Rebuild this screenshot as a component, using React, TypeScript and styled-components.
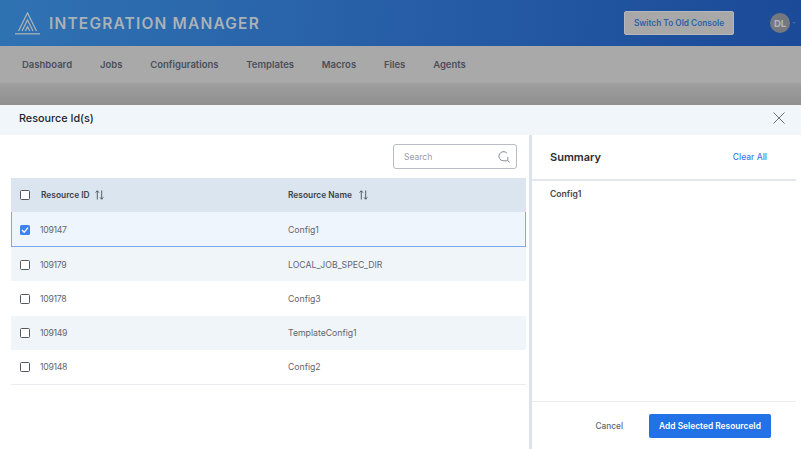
import styled, { createGlobalStyle } from "styled-components";

const GlobalStyle = createGlobalStyle`
  html, body {
    margin: 0;
    padding: 0;
    background: #fff;
  }
  * {
    box-sizing: border-box;
  }
`;

const Page = styled.div`
  width: 801px;
  height: 449px;
  display: flex;
  flex-direction: column;
  overflow: hidden;
  font-family: "Inter", "Liberation Sans", sans-serif;
`;

const Header = styled.header`
  height: 46px;
  flex: none;
  display: flex;
  align-items: center;
  padding: 0 4px 0 15px;
  background: linear-gradient(95deg, #2f72b2 0%, #2860a8 45%, #1b4a98 100%);
`;

const Brand = styled.div`
  display: flex;
  align-items: center;
  gap: 9px;
  flex: 1;
`;

const BrandName = styled.span`
  font-size: 15.5px;
  font-weight: 600;
  letter-spacing: 1.18px;
  color: #a9b2b8;
`;

const SwitchButton = styled.button`
  width: 110px;
  height: 24px;
  padding: 0;
  border: 1px solid #b4b7bb;
  border-radius: 2px;
  background: #a8a8a8;
  color: #2d62a8;
  font: 600 8.3px "Inter", sans-serif;
`;

const Avatar = styled.div`
  width: 20px;
  height: 20px;
  margin-left: 36px;
  border-radius: 50%;
  background: #75797f;
  color: #b4b6b8;
  font-size: 9.5px;
  font-weight: 700;
  display: flex;
  align-items: center;
  justify-content: center;
`;

const Caret = styled.span`
  width: 0;
  height: 0;
  margin: 0 1px 0 2px;
  border: 2px solid transparent;
  border-top-color: #3a66a8;
  border-bottom: none;
`;

const Nav = styled.nav`
  height: 37px;
  flex: none;
  display: flex;
  align-items: center;
  gap: 27.8px;
  padding: 0 22px;
  background: #a9a9a9;
`;

const NavItem = styled.span`
  font-size: 9.5px;
  font-weight: 600;
  color: #4b4f5a;
`;

const Crumb = styled.div`
  height: 22px;
  flex: none;
  overflow: hidden;
  padding: 19.5px 0 0 22px;
  background: linear-gradient(#9f9f9f, #8f8f8f);
  font-size: 9px;
  line-height: 11px;
  color: #666;
`;

const Modal = styled.section`
  flex: 1;
  min-height: 0;
  display: flex;
  flex-direction: column;
  background: #fff;
`;

const ModalHeader = styled.div`
  height: 30px;
  flex: none;
  display: flex;
  align-items: center;
  justify-content: space-between;
  padding: 0 16px 4px 19px;
  background: #f1f6fa;
`;

const ModalTitle = styled.h2`
  margin: 0;
  font-size: 10.8px;
  font-weight: 500;
  color: #22262b;
`;

const ModalBody = styled.div`
  flex: 1;
  min-height: 0;
  display: flex;
`;

const LeftPane = styled.div`
  width: 529px;
  flex: none;
  padding: 9px 3px 0 11px;
`;

const SearchRow = styled.div`
  display: flex;
  justify-content: flex-end;
  padding-right: 9px;
  margin-bottom: 9px;
`;

const SearchBox = styled.div`
  width: 124px;
  height: 25px;
  display: flex;
  align-items: center;
  justify-content: space-between;
  padding: 0 5px 0 10px;
  border: 1px solid #b9bbc6;
  border-radius: 3px;
  font-size: 8.5px;
  color: #9a9ca6;
`;

const HeadRow = styled.div`
  height: 34px;
  display: flex;
  align-items: center;
  background: #dae5f0;
`;

const Row = styled.div<{ $selected?: boolean; $shaded?: boolean; $last?: boolean }>`
  height: ${(p) => (p.$selected ? "35px" : p.$last ? "35.25px" : "34.25px")};
  padding-top: ${(p) => (p.$last ? "0" : "1px")};
  display: flex;
  align-items: center;
  font-size: 8.7px;
  color: #62666d;
  background: ${(p) => (p.$selected ? "#eef5fd" : p.$shaded ? "#f0f5f9" : "#fff")};
  border-style: solid;
  border-width: ${(p) => (p.$selected ? "0 1px 1px 1px" : p.$last ? "0 0 1px 0" : "0")};
  border-color: ${(p) => (p.$selected ? "#7ba9ec" : "#e9ebee")};
`;

const CheckCell = styled.div<{ $inset?: boolean }>`
  width: 29px;
  flex: none;
  padding-left: ${(p) => (p.$inset ? "8px" : "9px")};
  margin-right: ${(p) => (p.$inset ? "-1px" : "0")};
  display: flex;
  align-items: center;
`;

const IdCell = styled.div`
  width: 248px;
  flex: none;
  display: flex;
  align-items: center;
  gap: 5px;
  letter-spacing: -0.3px;
`;

const NameCell = styled.div`
  display: flex;
  align-items: center;
  gap: 7px;
`;

const HeadLabel = styled.span<{ $indent?: boolean }>`
  font-size: 8.4px;
  font-weight: 600;
  letter-spacing: 0;
  color: #3d4148;
  padding-left: ${(p) => (p.$indent ? "1px" : "0")};
`;

const Box = styled.span<{ $checked?: boolean }>`
  width: 10px;
  height: 10px;
  display: inline-flex;
  align-items: center;
  justify-content: center;
  border-radius: 1.5px;
  border: ${(p) => (p.$checked ? "none" : "1.2px solid #55585e")};
  background: ${(p) => (p.$checked ? "#3f82ee" : "#fff")};
`;

const Divider = styled.div`
  width: 3px;
  flex: none;
  background: #dce3ec;
`;

const RightPane = styled.aside`
  flex: 1;
  display: flex;
  flex-direction: column;
  padding-right: 5px;
`;

const SummaryHead = styled.div`
  height: 46px;
  flex: none;
  display: flex;
  align-items: center;
  justify-content: space-between;
  padding: 0 29px 0 18px;
  border-bottom: 2px solid #e4e8ed;
`;

const SummaryTitle = styled.span`
  font-size: 11px;
  font-weight: 600;
  color: #2b2e33;
`;

const ClearAll = styled.span`
  font-size: 8.5px;
  font-weight: 500;
  color: #3f7cf0;
`;

const SummaryList = styled.div`
  flex: 1;
  padding: 8px 18px;
  font-size: 8.6px;
  font-weight: 600;
  color: #43464c;
`;

const Footer = styled.div`
  height: 48px;
  flex: none;
  display: flex;
  align-items: center;
  justify-content: flex-end;
  gap: 26px;
  padding: 1px 25px 0 0;
  border-top: 1px solid #ebedf0;
`;

const CancelButton = styled.span`
  font-size: 8.3px;
  font-weight: 500;
  color: #5d6570;
`;

const PrimaryButton = styled.button`
  width: 122px;
  height: 24px;
  padding: 0;
  border: none;
  border-radius: 2px;
  background: #2271e6;
  color: #fff;
  font: 600 8.4px "Inter", sans-serif;
`;

const navItems = ["Dashboard", "Jobs", "Configurations", "Templates", "Macros", "Files", "Agents"];

const rows = [
  { id: "109147", name: "Config1", selected: true },
  { id: "109179", name: "LOCAL_JOB_SPEC_DIR" },
  { id: "109178", name: "Config3" },
  { id: "109149", name: "TemplateConfig1" },
  { id: "109148", name: "Config2" },
];

const Logo = () => (
  <svg width="25" height="23" viewBox="0 0 25 23" fill="none" stroke="#a9b2b8" strokeWidth="1.3">
    <path d="M0 21.8 H25" />
    <path d="M3.5 19 L12.5 1 L21.5 19" />
    <path d="M7 19 L12.5 8 L18 19" />
    <path d="M10.3 19 L12.5 14.6 L14.7 19" />
  </svg>
);

const SortIcon = () => (
  <svg width="9" height="10" viewBox="0 0 9 10" fill="none" stroke="#4a4e55" strokeWidth="0.9">
    <path d="M2.3 9.5 V0.8 M0.6 2.6 L2.3 0.8 L4 2.6" />
    <path d="M6.7 0.5 V9.2 M5 7.4 L6.7 9.2 L8.4 7.4" />
  </svg>
);

const SearchIcon = () => (
  <svg width="14" height="14" viewBox="0 0 14 14" fill="none" stroke="#7d808a" strokeWidth="0.9">
    <path d="M10 3.2 A4.6 4.6 0 1 0 6 10.8" />
    <path d="M6 10.8 H10.5 M10.8 7 V10.6 L12.6 12.6" />
  </svg>
);

const CloseIcon = () => (
  <svg width="12" height="12" viewBox="0 0 12 12" fill="none" stroke="#6b7380" strokeWidth="1">
    <path d="M0.5 0.5 L11.5 11.5 M11.5 0.5 L0.5 11.5" />
  </svg>
);

const App = () => {
  return (
    <Page>
      <GlobalStyle />
      <Header>
        <Brand>
          <Logo />
          <BrandName>INTEGRATION MANAGER</BrandName>
        </Brand>
        <SwitchButton>Switch To Old Console</SwitchButton>
        <Avatar>DL</Avatar>
        <Caret />
      </Header>
      <Nav>
        {navItems.map((item) => (
          <NavItem key={item}>{item}</NavItem>
        ))}
      </Nav>
      <Crumb>Jobs / Edit Job / Job Spec / Config</Crumb>
      <Modal>
        <ModalHeader>
          <ModalTitle>Resource Id(s)</ModalTitle>
          <CloseIcon />
        </ModalHeader>
        <ModalBody>
          <LeftPane>
            <SearchRow>
              <SearchBox>
                Search
                <SearchIcon />
              </SearchBox>
            </SearchRow>
            <HeadRow>
              <CheckCell>
                <Box />
              </CheckCell>
              <IdCell>
                <HeadLabel $indent>Resource ID</HeadLabel>
                <SortIcon />
              </IdCell>
              <NameCell>
                <HeadLabel>Resource Name</HeadLabel>
                <SortIcon />
              </NameCell>
            </HeadRow>
            {rows.map((row, idx) => (
              <Row
                key={row.id}
                $selected={row.selected}
                $shaded={idx % 2 === 1}
                $last={idx === rows.length - 1}
              >
                <CheckCell $inset={row.selected}>
                  <Box $checked={row.selected}>
                    {row.selected && (
                      <svg width="8" height="8" viewBox="0 0 8 8" fill="none" stroke="#fff" strokeWidth="1.3">
                        <path d="M1 4 L3.2 6.2 L7 1.6" />
                      </svg>
                    )}
                  </Box>
                </CheckCell>
                <IdCell>{row.id}</IdCell>
                <NameCell>{row.name}</NameCell>
              </Row>
            ))}
          </LeftPane>
          <Divider />
          <RightPane>
            <SummaryHead>
              <SummaryTitle>Summary</SummaryTitle>
              <ClearAll>Clear All</ClearAll>
            </SummaryHead>
            <SummaryList>Config1</SummaryList>
            <Footer>
              <CancelButton>Cancel</CancelButton>
              <PrimaryButton>Add Selected ResourceId</PrimaryButton>
            </Footer>
          </RightPane>
        </ModalBody>
      </Modal>
    </Page>
  );
};

export default App;
